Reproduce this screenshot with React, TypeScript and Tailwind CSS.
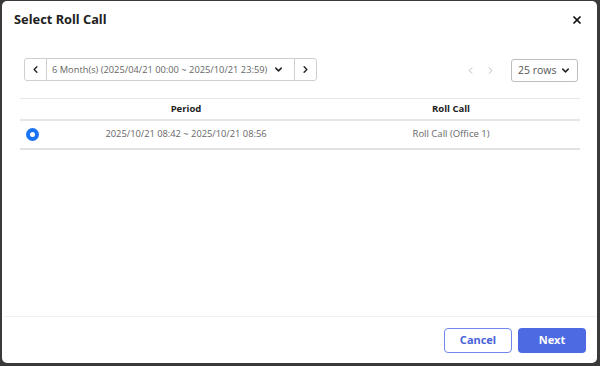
import React, { useState } from "react";
import { ChevronDown, ChevronLeft, ChevronRight, X } from "lucide-react";

const rows = [{ id: 1, period: "2025/10/21 08:42 ~ 2025/10/21 08:56", rollCall: "Roll Call (Office 1)" }];

export default function App() {
  const [selected, setSelected] = useState(1);

  return (
    <div className="w-[600px] h-[366px] bg-[#3a3a3a] pl-[2px] pr-[3px] pt-[1px] pb-[3px] font-['Open_Sans',sans-serif]">
      <div className="h-full bg-white rounded-[5px] flex flex-col">
        {/* header */}
        <div className="flex items-center justify-between pl-[12px] pr-[14px] pt-[6px] h-[31px]">
          <h1 className="font-['Noto_Sans',sans-serif] font-bold text-[12.8px] text-[#222]">Select Roll Call</h1>
          <X className="w-[12px] h-[12px] text-[#111]" strokeWidth={3.5} />
        </div>

        <div className="flex-1 px-[18px] pt-[25px]">
          {/* toolbar */}
          <div className="flex items-center justify-between pl-[4px]">
            <div className="flex items-center h-[23px] border border-[#cfcfcf] rounded-[3px]">
              <button className="w-[22px] h-full flex items-center justify-center border-r border-[#cfcfcf]">
                <ChevronLeft className="w-[11px] h-[11px] text-[#222]" strokeWidth={3} />
              </button>
              <div className="flex items-center h-full pl-[5px] pr-[10px] gap-[6px] text-[9.3px] text-[#666]">
                <span>6 Month(s) (2025/04/21 00:00 ~ 2025/10/21 23:59)</span>
                <ChevronDown className="w-[11px] h-[11px] text-[#222]" strokeWidth={3.2} />
              </div>
              <button className="w-[22px] h-full flex items-center justify-center border-l border-[#cfcfcf]">
                <ChevronRight className="w-[11px] h-[11px] text-[#222]" strokeWidth={3} />
              </button>
            </div>
            <div className="flex items-center gap-[9px] mt-[2px] mr-[1px]">
              <ChevronLeft className="w-[11px] h-[11px] text-[#b5b5b5]" strokeWidth={2} />
              <ChevronRight className="w-[11px] h-[11px] text-[#b5b5b5]" strokeWidth={2} />
              <div className="ml-[6px] flex items-center justify-between w-[67px] h-[23px] border border-[#bdbdbd] rounded-[3px] pl-[6px] pr-[6px] text-[10.5px] text-[#555]">
                <span>25 rows</span>
                <ChevronDown className="w-[11px] h-[11px] text-[#222]" strokeWidth={3.2} />
              </div>
            </div>
          </div>

          {/* table */}
          <table className="w-[560px] mt-[16px] border-collapse table-fixed">
            <colgroup>
              <col className="w-[30px]" />
              <col className="w-[272px]" />
              <col />
            </colgroup>
            <thead>
              <tr className="h-[21px] border-t border-b-2 border-[#e6e6e6]">
                <th></th>
                <th className="text-[9.5px] font-bold text-[#222] text-center">Period</th>
                <th className="text-[9.5px] font-bold text-[#222] text-center">Roll Call</th>
              </tr>
            </thead>
            <tbody>
              {rows.map((r) => (
                <tr key={r.id} className="h-[29px] border-b-2 border-[#e2e2e2]" onClick={() => setSelected(r.id)}>
                  <td className="pl-[6px]">
                    <span
                      className={`block w-[13px] h-[13px] rounded-full ${
                        selected === r.id ? "border-[4px] border-[#1a73f0] bg-white" : "border border-[#999]"
                      }`}
                    />
                  </td>
                  <td className="text-[9.3px] text-[#666] text-center">{r.period}</td>
                  <td className="text-[9.5px] text-[#666] text-center">{r.rollCall}</td>
                </tr>
              ))}
            </tbody>
          </table>
        </div>

        {/* footer */}
        <div className="border-t border-[#f0f0f0] flex justify-end gap-[6px] pt-[11px] pb-[10px] pr-[11px] ml-[2px]">
          <button className="w-[68px] h-[25px] rounded-[4px] border border-[#6f88ea] text-[#4a63d8] font-['Noto_Sans',sans-serif] font-bold text-[11px]">
            Cancel
          </button>
          <button className="w-[68px] h-[25px] rounded-[4px] bg-[#4d6ae2] text-white font-['Noto_Sans',sans-serif] font-bold text-[11px]">
            Next
          </button>
        </div>
      </div>
    </div>
  );
}
